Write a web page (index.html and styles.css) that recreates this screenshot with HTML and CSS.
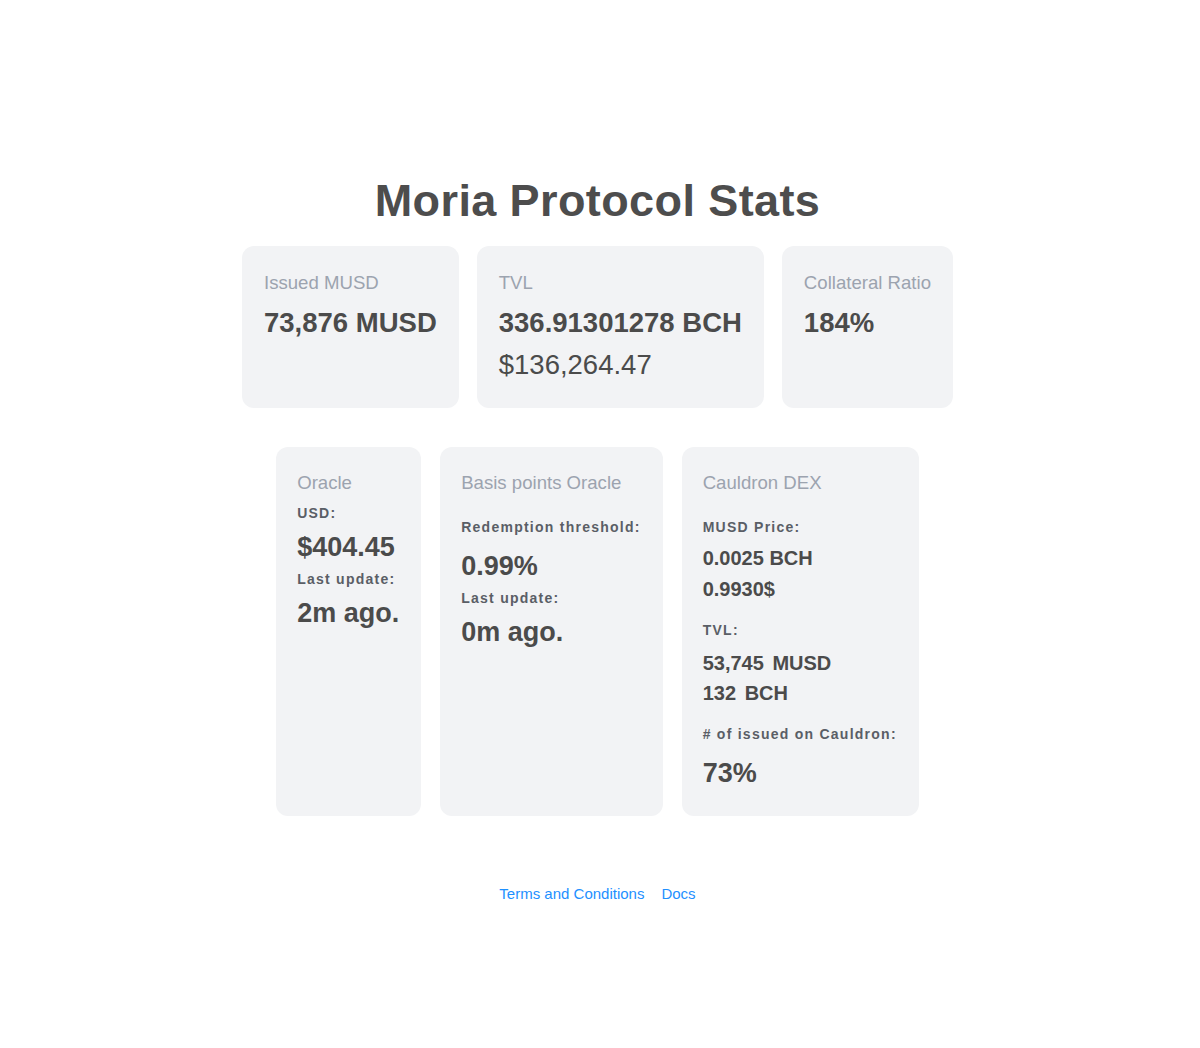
FILE: index.html
```html
<!DOCTYPE html>
<html lang="en">
<head>
  <meta charset="UTF-8">
  <meta name="viewport" content="width=device-width, initial-scale=1.0">
  <title>Moria Protocol Stats</title>
  <link rel="stylesheet" href="styles.css">
</head>
<body>

  <div class="page">
    <h1 class="title">Moria Protocol Stats</h1>

    <div class="row top">
      <div class="card">
        <div class="label">Issued MUSD</div>
        <div class="value">73,876 MUSD</div>
      </div>
      <div class="card">
        <div class="label">TVL</div>
        <div class="value">336.91301278 BCH</div>
        <div class="value light">$136,264.47</div>
      </div>
      <div class="card">
        <div class="label">Collateral Ratio</div>
        <div class="value">184%</div>
      </div>
    </div>

    <div class="row bottom">
      <div class="card">
        <div class="label">Oracle</div>
        <div class="sub">USD:</div>
        <div class="big">$404.45</div>
        <div class="sub">Last update:</div>
        <div class="big">2m ago.</div>
      </div>
      <div class="card">
        <div class="label">Basis points Oracle</div>
        <div class="sub spaced">Redemption threshold:</div>
        <div class="big gap">0.99%</div>
        <div class="sub">Last update:</div>
        <div class="big">0m ago.</div>
      </div>
      <div class="card">
        <div class="label">Cauldron DEX</div>
        <div class="sub spaced">MUSD Price:</div>
        <div class="mid first">0.0025 BCH</div>
        <div class="mid">0.9930$</div>
        <div class="sub sep">TVL:</div>
        <div class="mid first lower">53,745 <span class="unit">MUSD</span></div>
        <div class="mid tight">132 <span class="unit">BCH</span></div>
        <div class="sub sep">#&nbsp;of issued on Cauldron:</div>
        <div class="big gap">73%</div>
      </div>
    </div>

    <div class="links">
      <a href="#">Terms and Conditions</a>
      <a href="#">Docs</a>
    </div>
  </div>

</body>
</html>
```

FILE: styles.css
```css
body {
  margin: 0;
  background: #fff;
  font-family: "Liberation Sans", Arial, sans-serif;
  color: #4b4b4b;
}
.page {
  padding-top: 172px;
  padding-right: 5px;
  display: flex;
  flex-direction: column;
  align-items: center;
}
.title {
  margin: 0;
  font-size: 45px;
  line-height: 58px;
  font-weight: bold;
  letter-spacing: 0.4px;
  color: #4d4d4d;
}
.row {
  display: flex;
  justify-content: center;
  align-items: stretch;
}
.top {
  margin-top: 16px;
  gap: 18px;
}
.bottom {
  margin-top: 39px;
  gap: 19px;
}
.card {
  background: #f2f3f5;
  border-radius: 12px;
  padding: 26px 22px 28px 22px;
}
.top .card {
  height: 108px;
}
.bottom .card {
  padding: 25px 22px 27px 21px;
}
.label {
  font-size: 18.6px;
  line-height: 22px;
  color: #9ca3af;
}
.value {
  font-size: 27.5px;
  line-height: 30px;
  font-weight: bold;
  margin-top: 14px;
}
.value.light {
  font-weight: normal;
  margin-top: 12px;
}
.sub {
  font-size: 14px;
  line-height: 18px;
  font-weight: bold;
  letter-spacing: 1.25px;
  color: #5a5e66;
  margin-top: 7px;
}
.card .label + .sub {
  margin-top: 10px;
}
.card .label + .sub.spaced {
  margin-top: 24px;
}
.sub.sep {
  margin-top: 20px;
}
.big {
  font-size: 27px;
  line-height: 32px;
  font-weight: bold;
  margin-top: 9px;
}
.big.gap {
  margin-top: 14px;
}
.mid {
  font-size: 20px;
  line-height: 24px;
  font-weight: bold;
  margin-top: 7px;
}
.mid.first {
  margin-top: 10px;
}
.mid.first.lower {
  margin-top: 12px;
}
.mid.tight {
  margin-top: 6px;
}
.unit {
  margin-left: 3px;
}
.links {
  margin-top: 69px;
  display: flex;
  gap: 17px;
  font-size: 15px;
}
.links a {
  color: #1e90ff;
  text-decoration: none;
}
```
